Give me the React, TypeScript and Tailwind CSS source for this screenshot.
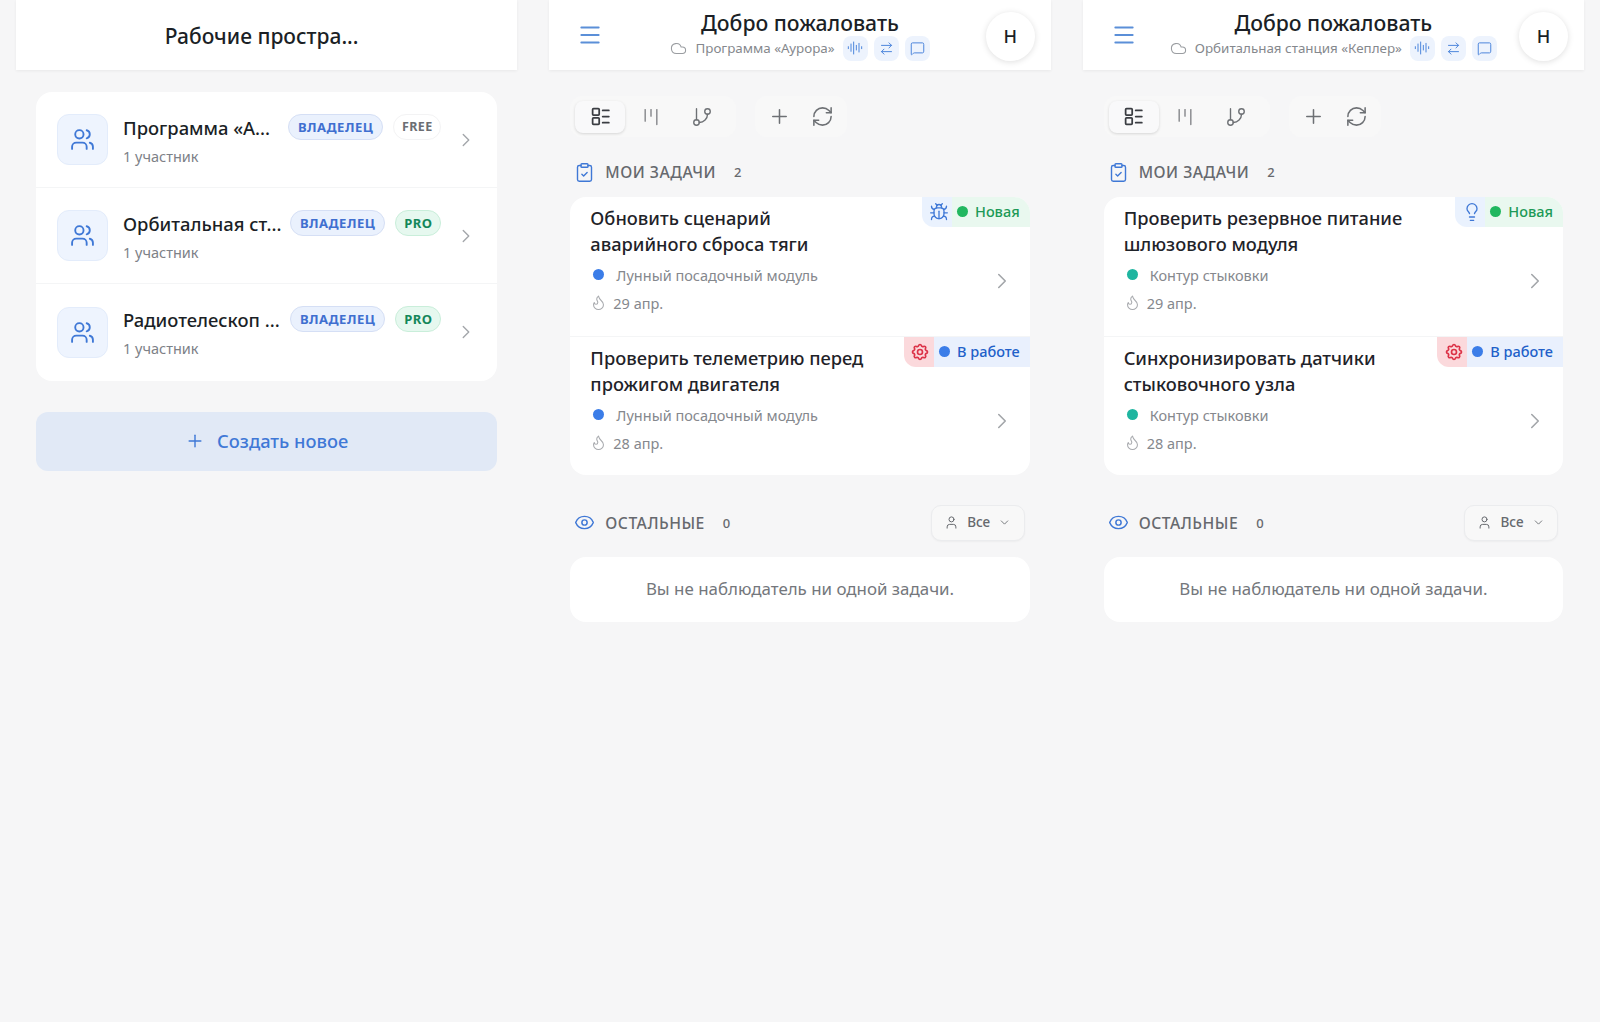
import {
  ArrowRightLeft,
  AudioLines,
  Bug,
  ChevronDown,
  ChevronRight,
  ClipboardCheck,
  Cloud,
  Eye,
  Flame,
  GitBranch,
  Kanban,
  Lightbulb,
  Menu,
  MessageSquare,
  Plus,
  RefreshCw,
  User,
  Users,
} from "lucide-react"
import { TbSettings } from "react-icons/tb"

const workspaces = [
  { name: "Программа «А...", plan: "FREE" },
  { name: "Орбитальная ст...", plan: "PRO" },
  { name: "Радиотелескоп ...", plan: "PRO" },
]

const boards = [
  {
    workspace: "Программа «Аурора»",
    project: "Лунный посадочный модуль",
    dot: "bg-[#3b7de8]",
    firstIcon: "bug",
    tasks: ["Обновить сценарий аварийного сброса тяги", "Проверить телеметрию перед прожигом двигателя"],
  },
  {
    workspace: "Орбитальная станция «Кеплер»",
    project: "Контур стыковки",
    dot: "bg-[#1fb5a0]",
    firstIcon: "idea",
    tasks: ["Проверить резервное питание шлюзового модуля", "Синхронизировать датчики стыковочного узла"],
  },
]

function WorkspacesPanel() {
  return (
    <div>
      <header className="flex h-[70px] items-center justify-center bg-white pr-[10px] shadow-[0_1px_3px_rgba(0,0,0,0.06)]">
        <h1 className="pt-1 text-[21px] font-medium text-[#1b1f26]">Рабочие простра...</h1>
      </header>
      <div className="px-5 pt-[22px]">
        <div className="divide-y divide-[#f4f5f6] rounded-2xl bg-white">
          {workspaces.map((ws) => (
            <div key={ws.name} className="flex h-[96.2px] items-center pl-[21px] pr-[20px]">
              <div className="flex size-[51px] shrink-0 items-center justify-center rounded-xl border border-[#e3ecfb] bg-[#eef4fe] text-[#3f78d6]">
                <Users className="size-[25px]" strokeWidth={1.8} />
              </div>
              <div className="ml-[15px] min-w-0 flex-1">
                <div className="whitespace-nowrap text-[18.4px] font-medium leading-7 text-[#1b1f26]">{ws.name}</div>
                <div className="mt-1 text-[14.5px] leading-5 text-[#7d8187]">1 участник</div>
              </div>
              <div className="mb-[26px] flex items-center gap-[10px]">
                <span className="rounded-full border border-[#d5dff5] bg-[#eaf1fd] px-[9px] py-[3px] text-[13px] font-bold leading-[18px] tracking-[0.5px] text-[#3f6fd0]">
                  ВЛАДЕЛЕЦ
                </span>
                {ws.plan === "PRO" ? (
                  <span className="w-[46px] rounded-full border border-[#c9eeda] bg-[#e6f8ef] py-[3px] text-center text-[13px] font-bold leading-[18px] tracking-[0.5px] text-[#14875a]">
                    PRO
                  </span>
                ) : (
                  <span className="w-[48px] rounded-full border border-[#f3f3f4] bg-white py-[3px] text-center text-[12.5px] font-bold leading-[18px] tracking-[0.4px] text-[#6b6e73]">
                    FREE
                  </span>
                )}
              </div>
              <ChevronRight className="ml-[14px] size-[22px] shrink-0 text-[#a3a6aa]" strokeWidth={1.5} />
            </div>
          ))}
        </div>
        <button className="mt-[31px] flex h-[59px] w-full items-center justify-center gap-3 rounded-xl bg-[#e1e9f6] text-[18.3px] font-medium text-[#3f78d6]">
          <Plus className="size-[20px]" strokeWidth={1.7} />
          Создать новое
        </button>
      </div>
    </div>
  )
}

function Chip({ children }: { children: React.ReactNode }) {
  return (
    <span className="flex size-[25px] items-center justify-center rounded-lg bg-[#edf3fd] text-[#4d86dc]">
      {children}
    </span>
  )
}

function ListIcon() {
  return (
    <svg viewBox="0 0 24 24" fill="none" stroke="currentColor" strokeWidth={2} strokeLinecap="round" strokeLinejoin="round" className="size-[21px]">
      <rect x="3" y="3" width="7.5" height="7.5" rx="1" />
      <rect x="3" y="13.5" width="7.5" height="7.5" rx="1" />
      <path d="M14.5 5h7" />
      <path d="M14.5 12h7" />
      <path d="M14.5 19h7" />
    </svg>
  )
}

function SectionTitle({
  icon,
  label,
  count,
}: {
  icon: React.ReactNode
  label: string
  count: number
}) {
  return (
    <div className="flex items-center">
      {icon}
      <span className="ml-[10px] text-[15.7px] font-medium tracking-[0.5px] text-[#66696e]">{label}</span>
      <span className="ml-[18px] text-[13px] font-medium text-[#66696e]">{count}</span>
    </div>
  )
}

function Board({ board }: { board: (typeof boards)[number] }) {
  return (
    <div>
      <header className="relative flex h-[70px] items-center bg-white shadow-[0_1px_3px_rgba(0,0,0,0.06)]">
        <Menu className="ml-[28px] size-[26px] text-[#5b8fd8]" strokeWidth={1.8} />
        <div className="min-w-0 flex-1 pr-[54px] text-center">
          <h2 className="text-[21.2px] font-medium leading-[26px] text-[#1b1f26]">Добро пожаловать</h2>
          <div className="flex items-center justify-center">
            <Cloud className="size-[17px] text-[#9a9da1]" strokeWidth={1.5} />
            <span className="ml-2 text-[13.4px] text-[#85888d]">{board.workspace}</span>
            <div className="ml-2 flex gap-1.5">
              <Chip>
                <AudioLines className="size-[16px]" strokeWidth={1.5} />
              </Chip>
              <Chip>
                <ArrowRightLeft className="size-[15px]" strokeWidth={1.6} />
              </Chip>
              <Chip>
                <MessageSquare className="size-[15px]" strokeWidth={1.6} />
              </Chip>
            </div>
          </div>
        </div>
        <div className="absolute right-4 top-3 flex size-[49px] items-center justify-center rounded-full bg-white text-[18px] font-medium text-[#1b1f26] shadow-[0_1px_6px_rgba(0,0,0,0.13)]">
          Н
        </div>
      </header>

      <div className="px-[21px]">
        <div className="flex items-start gap-[19px] pt-[26px]">
          <div className="flex h-[41px] items-center rounded-xl bg-[#f8f8f8] pl-[5px] pr-[9px]">
            <span className="flex h-[32px] w-[50px] items-center justify-center rounded-lg bg-[#f9f9fa] text-[#3a3d42] shadow-[0_1px_3px_rgba(0,0,0,0.14)]">
              <ListIcon />
            </span>
            <span className="flex w-[52px] justify-center text-[#77797d]">
              <Kanban className="size-[20px]" strokeWidth={1.5} />
            </span>
            <span className="flex w-[50px] justify-center text-[#6d7074]">
              <GitBranch className="size-[22px]" strokeWidth={1.5} />
            </span>
          </div>
          <div className="flex h-[41px] items-center gap-[20px] rounded-xl bg-[#f8f8f8] px-[13px]">
            <Plus className="size-[23px] text-[#6d7074]" strokeWidth={1.6} />
            <RefreshCw className="size-[23px] text-[#6d7074]" strokeWidth={1.6} />
          </div>
        </div>

        <div className="mt-[24px] pl-1">
          <SectionTitle
            icon={<ClipboardCheck className="size-[21px] text-[#3f78d6]" strokeWidth={1.6} />}
            label="МОИ ЗАДАЧИ"
            count={board.tasks.length}
          />
        </div>

        <div className="mt-[12px] overflow-hidden rounded-2xl bg-white">
          {board.tasks.map((title, i) => (
            <div
              key={title}
              className={`relative flex h-[139px] items-start pl-5 pr-[15px] pt-[8px] ${i > 0 ? "border-t border-[#f4f5f6]" : ""}`}
            >
              <div className="min-w-0 flex-1">
                <div className="max-w-[290px] text-[18.3px] font-medium leading-[26px] text-[#1f2329]">{title}</div>
                <div className="mt-[6px] flex items-center text-[14.5px] leading-[24px] text-[#85888d]">
                  <span className={`ml-[3px] size-[11px] rounded-full ${board.dot}`} />
                  <span className="ml-[12px]">{board.project}</span>
                </div>
                <div className="mt-[4px] flex items-center text-[14.5px] leading-[24px] text-[#85888d]">
                  <Flame className="size-[17px] text-[#a9abaf]" strokeWidth={1.5} />
                  <span className="ml-[6px]">{i === 0 ? "29 апр." : "28 апр."}</span>
                </div>
              </div>
              <ChevronRight className="mt-[63px] size-[26px] shrink-0 text-[#a3a6aa]" strokeWidth={1.5} />

              {/* type + status tag in the card corner */}
              <div className="absolute right-0 top-0 flex h-[30px] overflow-hidden rounded-bl-xl">
                {i === 0 ? (
                  <span className="flex w-[30px] items-center justify-center bg-[#eaf2fe] pl-[3px] text-[#3f78d6]">
                    {board.firstIcon === "bug" ? (
                      <Bug className="size-[20px]" strokeWidth={1.6} />
                    ) : (
                      <Lightbulb className="size-[20px]" strokeWidth={1.6} />
                    )}
                  </span>
                ) : (
                  <span className="flex w-[30px] items-center justify-center bg-[#fbd9dc] pl-[3px] text-[#dc3348]">
                    <TbSettings className="size-[20px]" />
                  </span>
                )}
                <span
                  className={`flex items-center gap-[7px] pl-[5px] pr-[10px] text-[14.5px] font-medium ${
                    i === 0 ? "bg-[#e9f8ef] text-[#1d9a57]" : "bg-[#e9f0fd] text-[#2160c9]"
                  }`}
                >
                  <span className={`size-[11px] rounded-full ${i === 0 ? "bg-[#21b75f]" : "bg-[#3b7de8]"}`} />
                  {i === 0 ? "Новая" : "В работе"}
                </span>
              </div>
            </div>
          ))}
        </div>

        <div className="mt-[30px] flex items-center justify-between pl-1 pr-[5px]">
          <SectionTitle
            icon={<Eye className="mb-[3px] size-[21px] text-[#3f78d6]" strokeWidth={1.7} />}
            label="ОСТАЛЬНЫЕ"
            count={0}
          />
          <button className="mb-[3px] flex h-[36px] w-[94px] items-center justify-center gap-2 rounded-[10px] border border-[#ebecee] bg-[#f8f8f8] text-[13.5px] font-medium text-[#66696e] shadow-[0_1px_2px_rgba(0,0,0,0.04)]">
            <User className="size-[15px]" strokeWidth={1.6} />
            Все
            <ChevronDown className="size-[13px]" strokeWidth={1.6} />
          </button>
        </div>

        <div className="mt-[13px] flex h-[65px] items-center justify-center rounded-2xl bg-white text-[16.9px] text-[#74777c]">
          Вы не наблюдатель ни одной задачи.
        </div>
      </div>
    </div>
  )
}

export default function App() {
  return (
    <div className="min-h-[1022px] bg-[#f6f6f7] font-['Noto_Sans',sans-serif]">
      <div className="grid grid-cols-3 gap-8 px-4">
        <WorkspacesPanel />
        {boards.map((board) => (
          <Board key={board.workspace} board={board} />
        ))}
      </div>
    </div>
  )
}
